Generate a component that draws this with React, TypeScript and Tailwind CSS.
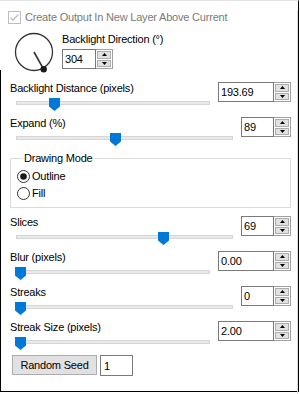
import React from "react";

const Up = () => (
  <svg width="5" height="3" viewBox="0 0 5 3"><polygon points="2.5,0 5,3 0,3" fill="#000" /></svg>
);
const Down = () => (
  <svg width="5" height="3" viewBox="0 0 5 3"><polygon points="0,0 5,0 2.5,3" fill="#000" /></svg>
);

function Spin({ value, w }: { value: string; w: string }) {
  return (
    <div className="flex h-[20px]">
      <div className={`flex items-center border border-[#7a7a7a] bg-white pl-[2px] ${w}`}>{value}</div>
      <div className="flex w-[17px] flex-col gap-px border-y border-r border-[#a0a0a0] bg-white p-px">
        <div className="flex flex-1 items-center justify-center border border-[#adadad] bg-[#e1e1e1]">
          <Up />
        </div>
        <div className="flex flex-1 items-center justify-center border border-[#adadad] bg-[#e1e1e1]">
          <Down />
        </div>
      </div>
    </div>
  );
}

function Thumb({ left }: { left: number }) {
  return (
    <svg className="absolute top-[3px]" style={{ left }} width="11" height="13" viewBox="0 0 11 13">
      <polygon points="0,0 11,0 11,8.5 5.5,13 0,8.5" fill="#0078d7" />
    </svg>
  );
}

function Section({ label, value, w, thumb }: { label: string; value: string; w: string; thumb: number }) {
  return (
    <div className="flex h-[35px]">
      <div className="flex flex-1 flex-col">
        <div className="h-[14px]">{label}</div>
        <div className="relative h-[21px]">
          <div className="ml-[6px] mt-[6px] h-[4px] border border-[#d6d6d6] bg-[#e7eaea]" />
          <Thumb left={thumb} />
        </div>
      </div>
      <div className="ml-2 mt-px">
        <Spin value={value} w={w} />
      </div>
    </div>
  );
}

function Radio({ label, checked }: { label: string; checked?: boolean }) {
  return (
    <div className="flex h-[14px] items-center">
      <svg width="13" height="13" viewBox="0 0 13 13">
        <circle cx="6.5" cy="6.5" r="6" fill="#fff" stroke="#333" strokeWidth="1" />
        {checked && <circle cx="6.5" cy="6.5" r="3.3" fill="#1a1a1a" />}
      </svg>
      <span className="ml-[2px]">{label}</span>
    </div>
  );
}

export default function App() {
  return (
    <div className="relative h-[394px] w-[300px] bg-white font-['Liberation_Sans',Arial,sans-serif] text-[11px] leading-[14px] tracking-[-0.2px] text-black">
      <div className="h-[392px] w-[299px] border-r border-b border-t border-black border-t-[#e3e3e3]">
        <div className="h-full w-full border-r border-[#d9d9d9]">
          {/* checkbox row */}
          <div className="ml-[8px] mt-[9px] flex h-[14px] items-center">
            <svg width="13" height="13" viewBox="0 0 13 13">
              <rect x="0.5" y="0.5" width="12" height="12" fill="#fff" stroke="#bcbcbc" />
              <polyline points="2.5,6.5 5,9 10.5,3.5" fill="none" stroke="#bcbcbc" strokeWidth="1.3" />
            </svg>
            <span className="ml-[4px] text-[#7a7a7a]">Create Output In New Layer Above Current</span>
          </div>

          {/* dial row */}
          <div className="ml-[14px] mt-[8px] flex h-[40px]">
            <svg width="42" height="42" viewBox="0 0 42 42" className="overflow-visible">
              <circle cx="20" cy="20" r="18.5" fill="none" stroke="#333" strokeWidth="1.3" />
              <line x1="20" y1="20" x2="29.7" y2="37.3" stroke="#333" strokeWidth="1.6" />
              <circle cx="29.7" cy="37.3" r="3.2" fill="#1a1a1a" />
            </svg>
            <div className="ml-[6px] flex flex-col">
              <div className="h-[14px]">Backlight Direction (°)</div>
              <div className="mt-[3px]">
                <Spin value="304" w="w-[34px]" />
              </div>
            </div>
          </div>

          <div className="ml-[10px] mt-[9px] w-[281px]">
            <Section label="Backlight Distance (pixels)" value="193.69" w="w-[56px]" thumb={39} />
            <Section label="Expand (%)" value="89" w="w-[33px]" thumb={100} />

            <fieldset className="h-[57px] border border-[#dcdcdc] pl-[6px]">
              <legend className="ml-[6px] px-[1px]">Drawing Mode</legend>
              <div className="mt-[4px] flex flex-col gap-[3px]">
                <Radio label="Outline" checked />
                <Radio label="Fill" />
              </div>
            </fieldset>

            <div className="mt-[7px]">
              <Section label="Slices" value="69" w="w-[33px]" thumb={148} />
              <Section label="Blur (pixels)" value="0.00" w="w-[56px]" thumb={5} />
              <Section label="Streaks" value="0" w="w-[33px]" thumb={5} />
              <Section label="Streak Size (pixels)" value="2.00" w="w-[56px]" thumb={5} />
            </div>

            <div className="ml-[2px] flex h-[21px] items-start">
              <div className="flex h-[20px] w-[85px] items-center justify-center border border-[#adadad] bg-[#e1e1e1]">
                Random Seed
              </div>
              <div className="ml-[3px] flex h-[21px] w-[33px] items-center border border-[#7a7a7a] bg-white pl-[3px]">
                1
              </div>
            </div>
          </div>
        </div>
      </div>
      <div className="absolute bottom-[2px] left-0 top-[70px] w-px bg-black" />
    </div>
  );
}
